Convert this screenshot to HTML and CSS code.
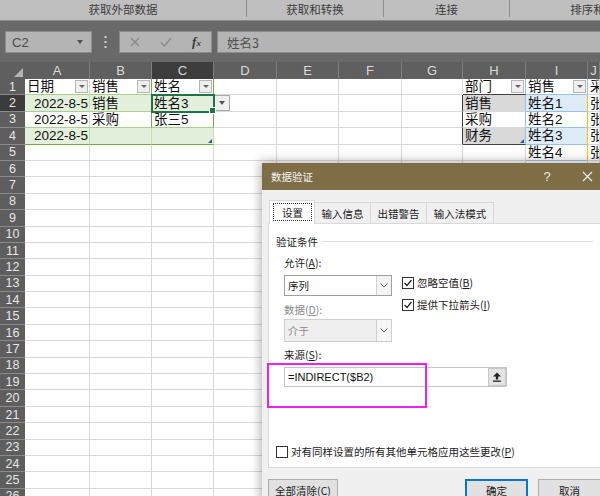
FILE: index.html
```html
<!DOCTYPE html>
<html lang="zh-CN">
<head>
<meta charset="utf-8">
<title>数据验证</title>
<link rel="stylesheet" href="styles.css">
</head>
<body>
<div class="ribbon">
  <div class="grp w1">获取外部数据</div>
  <div class="grp w2">获取和转换</div>
  <div class="grp w3">连接</div>
  <div class="grp w4">排序和筛选</div>
</div>
<div class="fbar">
  <div class="namebox"><span>C2</span><span class="ntri"></span></div>
  <div class="dots"><svg width="3" height="12" viewBox="0 0 3 12"><rect x="0.5" y="0" width="2" height="2"/><rect x="0.5" y="5" width="2" height="2"/><rect x="0.5" y="10" width="2" height="2"/></svg></div>
  <div class="fbtns">
    <svg width="10" height="10" viewBox="0 0 10 10"><path d="M1 1L9 9M9 1L1 9" stroke="#8a8a8a" stroke-width="1.3"/></svg>
    <svg width="12" height="10" viewBox="0 0 12 10"><path d="M1 5.5L4.5 9L11 1" stroke="#8a8a8a" stroke-width="1.3" fill="none"/></svg>
    <span class="fx">f<small>x</small></span>
  </div>
  <div class="finput">姓名3</div>
</div>
<div class="sheet">
  <div class="row hdr"><b class="corner"><svg width="9" height="9" viewBox="0 0 9 9"><path d="M9 0V9H0Z" fill="#b4b4b4"/></svg></b><i>A</i><i>B</i><i class="csel">C</i><i>D</i><i>E</i><i>F</i><i>G</i><i>H</i><i>I</i><i>J</i></div>
  <div class="row"><b>1</b><i class="flt t">日期<span class="fb"></span></i><i class="flt t cb">销售<span class="fb"></span></i><i class="flt t cc">姓名<span class="fb"></span></i><i></i><i></i><i></i><i></i><i class="flt hh hr">部门<span class="fb"></span></i><i class="flt ib ih">销售<span class="fb"></span></i><i class="jc">采</i></div>
  <div class="row"><b class="rsel">2</b><i class="num t g">2022-8-5</i><i class="t g cb">销售</i><i class="t g cc act">姓名3</i><i class="dd"><span class="ddb"></span></i><i></i><i></i><i class="gd"></i><i class="hg hr">销售</i><i class="ib ibg">姓名1</i><i class="jc">张</i></div>
  <div class="row"><b>3</b><i class="num t">2022-8-5</i><i class="t cb">采购</i><i class="t cc">张三5</i><i></i><i></i><i></i><i class="gd"></i><i class="hr">采购</i><i class="ib">姓名2</i><i class="jc">张</i></div>
  <div class="row"><b>4</b><i class="num t g tl">2022-8-5</i><i class="t g cb tl"></i><i class="t g cc tl rs"></i><i></i><i></i><i></i><i class="gd"></i><i class="hg hr hl rs">财务</i><i class="ib ibg">姓名3</i><i class="jc">张</i></div>
  <div class="row"><b>5</b><i></i><i></i><i></i><i></i><i></i><i></i><i></i><i></i><i class="ib">姓名4</i><i class="jc">张</i></div>
  <div class="row"><b>6</b><i></i><i></i><i></i><i></i><i></i><i></i><i></i><i></i><i></i><i></i></div>
  <div class="row"><b>7</b><i></i><i></i><i></i><i></i><i></i><i></i><i></i><i></i><i></i><i></i></div>
  <div class="row"><b>8</b><i></i><i></i><i></i><i></i><i></i><i></i><i></i><i></i><i></i><i></i></div>
  <div class="row"><b>9</b><i></i><i></i><i></i><i></i><i></i><i></i><i></i><i></i><i></i><i></i></div>
  <div class="row"><b>10</b><i></i><i></i><i></i><i></i><i></i><i></i><i></i><i></i><i></i><i></i></div>
  <div class="row"><b>11</b><i></i><i></i><i></i><i></i><i></i><i></i><i></i><i></i><i></i><i></i></div>
  <div class="row"><b>12</b><i></i><i></i><i></i><i></i><i></i><i></i><i></i><i></i><i></i><i></i></div>
  <div class="row"><b>13</b><i></i><i></i><i></i><i></i><i></i><i></i><i></i><i></i><i></i><i></i></div>
  <div class="row"><b>14</b><i></i><i></i><i></i><i></i><i></i><i></i><i></i><i></i><i></i><i></i></div>
  <div class="row"><b>15</b><i></i><i></i><i></i><i></i><i></i><i></i><i></i><i></i><i></i><i></i></div>
  <div class="row"><b>16</b><i></i><i></i><i></i><i></i><i></i><i></i><i></i><i></i><i></i><i></i></div>
  <div class="row"><b>17</b><i></i><i></i><i></i><i></i><i></i><i></i><i></i><i></i><i></i><i></i></div>
  <div class="row"><b>18</b><i></i><i></i><i></i><i></i><i></i><i></i><i></i><i></i><i></i><i></i></div>
  <div class="row"><b>19</b><i></i><i></i><i></i><i></i><i></i><i></i><i></i><i></i><i></i><i></i></div>
  <div class="row"><b>20</b><i></i><i></i><i></i><i></i><i></i><i></i><i></i><i></i><i></i><i></i></div>
  <div class="row"><b>21</b><i></i><i></i><i></i><i></i><i></i><i></i><i></i><i></i><i></i><i></i></div>
  <div class="row"><b>22</b><i></i><i></i><i></i><i></i><i></i><i></i><i></i><i></i><i></i><i></i></div>
  <div class="row"><b>23</b><i></i><i></i><i></i><i></i><i></i><i></i><i></i><i></i><i></i><i></i></div>
  <div class="row"><b>24</b><i></i><i></i><i></i><i></i><i></i><i></i><i></i><i></i><i></i><i></i></div>
  <div class="row"><b>25</b><i></i><i></i><i></i><i></i><i></i><i></i><i></i><i></i><i></i><i></i></div>
  <div class="row"><b>26</b><i></i><i></i><i></i><i></i><i></i><i></i><i></i><i></i><i></i><i></i></div>
</div>

<div class="dialog">
  <div class="dtitle">
    <span class="dname">数据验证</span>
    <span class="tbtn">?</span>
    <span class="tbtn"><svg width="11" height="11" viewBox="0 0 11 11"><path d="M1 1L10 10M10 1L1 10" stroke="#ececec" stroke-width="1.2"/></svg></span>
  </div>
  <div class="tabs">
    <div class="tab on"><span class="focus">设置</span></div>
    <div class="tab t2">输入信息</div>
    <div class="tab t3">出错警告</div>
    <div class="tab t4">输入法模式</div>
  </div>
  <div class="panel">
    <div class="legend"><span>验证条件</span><span class="rule"></span></div>
    <div class="crit">
      <div class="cols">
        <div class="lcol">
          <div class="lbl">允许(<u>A</u>):</div>
          <div class="select"><span class="sv">序列</span><span class="arr"><svg width="8" height="5" viewBox="0 0 8 5"><path d="M0.5 0.5L4 4L7.5 0.5" stroke="#5a5a5a" fill="none"/></svg></span></div>
          <div class="lbl dis lbl2">数据(<u>D</u>):</div>
          <div class="select off"><span class="sv">介于</span><span class="arr"><svg width="8" height="5" viewBox="0 0 8 5"><path d="M0.5 0.5L4 4L7.5 0.5" stroke="#5a5a5a" fill="none"/></svg></span></div>
        </div>
        <div class="rcol">
          <div class="chk"><span class="box"><svg width="10" height="10" viewBox="0 0 10 10"><path d="M1.5 5L4 7.5L8.5 2" stroke="#222" stroke-width="1.2" fill="none"/></svg></span>忽略空值(<u>B</u>)</div>
          <div class="chk"><span class="box"><svg width="10" height="10" viewBox="0 0 10 10"><path d="M1.5 5L4 7.5L8.5 2" stroke="#222" stroke-width="1.2" fill="none"/></svg></span>提供下拉箭头(<u>I</u>)</div>
        </div>
      </div>
      <div class="lbl src">来源(<u>S</u>):</div>
      <div class="srcin"><span class="formula">=INDIRECT($B2)</span><span class="pick"><svg width="10" height="10" viewBox="0 0 10 10"><path d="M5 0.5L9 4.5H6.2V7.5H3.8V4.5H1Z" fill="#222"/><rect x="1" y="8.5" width="8" height="1.3" fill="#222"/></svg></span></div>
    </div>
    <div class="chk all"><span class="box"></span>对有同样设置的所有其他单元格应用这些更改(<u>P</u>)</div>
  </div>
  <div class="btns">
    <span class="btn clr">全部清除(<u>C</u>)</span>
    <span class="btn ok">确定</span>
    <span class="btn cancel">取消</span>
  </div>
</div>
<div class="mark"></div>
</body>
</html>
```
FILE: styles.css
```css
* { box-sizing: border-box; margin: 0; padding: 0; }
html, body { width: 600px; height: 496px; overflow: hidden; background: #ffffff; }
body { position: relative; font-family: "Liberation Sans", "Noto Sans CJK SC", sans-serif; color: #111; }

/* ribbon group labels */
.ribbon { display: flex; height: 20px; background: #bfbfbf; font-family: "Noto Sans CJK SC", sans-serif; font-size: 11.5px; color: #3d3d3d; overflow: hidden; }
.grp { flex: none; height: 17px; display: flex; align-items: center; justify-content: center; border-right: 1px solid #8e8e8e; white-space: nowrap; }
.w1 { width: 247px; }
.w2 { width: 137px; }
.w3 { width: 126px; }
.w4 { width: 178px; border-right: none; }

/* formula bar */
.fbar { height: 42px; background: #696969; display: flex; align-items: flex-start; padding: 10px 0 0 5px; border-top: 1px solid #8a8a8a; }
.namebox { width: 87px; height: 22px; background: #b4b4b4; border: 1px solid #8c8c8c; display: flex; align-items: center; justify-content: space-between; padding: 0 8px 0 6px; font-size: 13px; color: #4a4a4a; }
.ntri { width: 0; height: 0; border-left: 3.5px solid transparent; border-right: 3.5px solid transparent; border-top: 4px solid #4f4f4f; }
.dots { width: 27px; height: 22px; display: flex; align-items: center; justify-content: center; fill: #d2d2d2; }
.fbtns { width: 93px; height: 22px; background: #b4b4b4; border: 1px solid #8c8c8c; display: flex; align-items: center; justify-content: space-around; }
.fx { font-family: "Liberation Serif", serif; font-style: italic; font-weight: bold; font-size: 13px; color: #3a3a3a; }
.fx small { font-size: 9px; }
.finput { flex: 1; margin-left: 5px; height: 22px; background: #b4b4b4; border: 1px solid #8c8c8c; border-right: none; padding-left: 9px; display: flex; align-items: center; font-family: "Noto Sans CJK SC", sans-serif; font-size: 12.5px; color: #505050; }

/* sheet */
.row { display: grid; grid-template-columns: 25px 65px 62px 62px 63px 62px 63px 61px 63px 62px 1fr; height: 16.4px; }
.row > b { background: #5e5e5e; color: #e6e6e6; font-weight: normal; font-size: 12.5px; display: flex; align-items: center; justify-content: center; border-bottom: 1px solid #8a8a8a; }
.row > b.rsel { background: #3b3b3b; }
.row > i { font-style: normal; border-right: 1px solid #d9d9d9; border-bottom: 1px solid #d9d9d9; display: flex; align-items: center; padding: 0 2px; font-family: "Liberation Sans", "Noto Sans CJK SC", sans-serif; font-size: 13.5px; line-height: 15px; white-space: nowrap; overflow: hidden; color: #111; }

.row.hdr { height: 17px; }
.row.hdr > * { background: #5f5f5f; color: #dadada; border: none; border-right: 1px solid #7e7e7e; display: flex; align-items: center; justify-content: center; font-size: 13px; font-style: normal; padding: 0; }
.row.hdr > .corner { align-items: flex-end; justify-content: flex-end; padding: 0 2px 2px 0; border-right: none; }
.row.hdr > .csel { background: #3d3d3d; }

.row > i.num { justify-content: flex-end; padding-right: 1px; }
.row > i.flt { padding-right: 1px; }
.fb { flex: none; margin-left: auto; width: 13px; height: 13px; background: #efefef; border: 1px solid #b6b6b6; display: flex; align-items: center; justify-content: center; }
.fb::after { content: ""; width: 0; height: 0; border-left: 3px solid transparent; border-right: 3px solid transparent; border-top: 3.5px solid #666; }

/* green table A1:C4 */
.row > i.t { border-bottom-color: #a9d08e; }
.row > i.g { background: #e2efda; }
.row > i.t.g { border-right-color: #c6e0b4; }
.row > i.cb, .row > i.cc { border-right-color: #70ad47; }
.row > i.tl { border-bottom-color: #70ad47; }
.row > i.act { position: relative; overflow: visible; outline: 2px solid #217346; outline-offset: -1px; z-index: 1; }
.row > i.act::after { content: ""; position: absolute; right: -3px; bottom: -3px; width: 5px; height: 5px; background: #217346; border: 1px solid #fff; }
.row > i.rs { position: relative; }
.row > i.rs::after { content: ""; position: absolute; right: 1px; bottom: 1px; width: 0; height: 0; border-left: 4px solid transparent; border-bottom: 4px solid #2f5597; }

/* dropdown arrow next to C2 */
.row > i.dd { padding: 0; align-items: flex-start; }
.ddb { width: 16px; height: 16px; background: #f0f0f0; border: 1px solid #a9a9a9; display: flex; align-items: center; justify-content: center; }
.ddb::after { content: ""; width: 0; height: 0; border-left: 3.5px solid transparent; border-right: 3.5px solid transparent; border-top: 4px solid #555; }

/* gray table H */
.row > i.gd { border-right-color: #404040; }
.row > i.hh { border-bottom-color: #404040; }
.row > i.hg { background: #d9d9d9; }
.row > i.hr { border-right-color: #9bc2e6; }
.row > i.hl { border-bottom-color: #404040; }

/* blue table I */
.row > i.ib { border-right-color: #ffc000; border-bottom-color: #9bc2e6; }
.row > i.ih { border-right-color: #9bc2e6; }
.row > i.ibg { background: #ddebf7; }
.row > i.jc { padding-left: 2px; }

/* dialog */
.dialog { position: absolute; left: 262px; top: 163px; width: 345px; height: 345px; background: #f0f0f0; box-shadow: 0 0 10px 2px rgba(0, 0, 0, 0.28); font-family: "Noto Sans CJK SC", sans-serif; font-size: 10.5px; color: #1a1a1a; }
.dtitle { height: 27px; background: #7f6e45; display: flex; align-items: center; padding-left: 9px; color: #f4f4f4; }
.dname { flex: 1; }
.tbtn { width: 40px; height: 27px; display: flex; align-items: center; justify-content: center; font-family: "Liberation Sans", sans-serif; font-size: 13px; color: #e8e8e8; }

.tabs { display: flex; align-items: flex-end; height: 33px; padding: 10px 0 0 7px; }
.tab { height: 21px; border: 1px solid #d9d9d9; border-bottom: none; display: flex; align-items: center; justify-content: center; background: #f0f0f0; margin-left: -1px; }
.tab.on { width: 46px; height: 24px; margin-left: 0; margin-bottom: -1px; background: #fff; padding: 2px 2px 3px 3px; position: relative; z-index: 1; }
.focus { width: 100%; height: 100%; border: 1px dotted #333; display: flex; align-items: center; justify-content: center; }
.t2 { width: 57px; }
.t3 { width: 57px; }
.t4 { width: 68px; }

.panel { margin-left: 6px; width: 333px; height: 245px; background: #fff; border: 1px solid #d9d9d9; padding: 10px 0 0 7px; }
.legend { display: flex; align-items: center; height: 14px; color: #222; }
.rule { flex: 1; height: 1px; background: #dcdcdc; margin: 0 7px 0 4px; }
.crit { padding-left: 8px; margin-top: 8px; }
.cols { display: flex; }
.lcol { width: 108px; flex: none; }
.lbl { height: 14px; line-height: 14px; }
.lbl u, .chk u, .btn u { text-decoration: underline; }
.dis { color: #8a8a8a; }
.lbl2 { margin-top: 7px; }
.select { margin-top: 5px; height: 21px; border: 1px solid #9f9f9f; background: #fff; display: flex; align-items: stretch; }
.select .sv { flex: 1; display: flex; align-items: center; padding-left: 3px; }
.select .arr { width: 15px; border-left: 1px solid #d3d3d3; background: #f4f4f4; display: flex; align-items: center; justify-content: center; }
.select.off { margin-top: 2px; height: 23px; background: #efefef; border-color: #cfcfcf; color: #8a8a8a; }
.select.off .arr { background: #f6f6f6; border-left-color: #cfcfcf; }
.rcol { padding: 20px 0 0 10px; display: flex; flex-direction: column; gap: 8px; }
.chk { display: flex; align-items: center; height: 14px; line-height: 14px; white-space: nowrap; }
.box { width: 12px; height: 12px; flex: none; border: 1px solid #333; background: #fff; margin-right: 3px; display: flex; align-items: center; justify-content: center; }
.src { margin-top: 6px; }
.srcin { margin-top: 5px; width: 223px; height: 20px; border: 1px solid #c4c4c4; background: #fff; display: flex; align-items: center; }
.formula { flex: 1; padding-left: 3px; font-family: "Liberation Sans", sans-serif; font-size: 11px; color: #111; }
.pick { width: 18px; height: 18px; background: #e4e4e4; border: 1px solid #c8c8c8; display: flex; align-items: center; justify-content: center; }
.chk.all { margin-top: 58px; }

.btns { display: flex; padding: 11px 6px 0 6px; gap: 10px; }
.btn { height: 22px; display: flex; align-items: center; justify-content: center; background: #e1e1e1; border: 1px solid #adadad; white-space: nowrap; }
.clr { width: 70px; margin-right: auto; }
.ok { width: 63px; border-color: #0078d7; box-shadow: inset 0 0 0 1px #0078d7; }
.cancel { width: 63px; }

/* highlight annotation */
.mark { position: absolute; left: 267px; top: 363px; width: 160px; height: 45px; border: 2px solid #ee22ee; }
```
